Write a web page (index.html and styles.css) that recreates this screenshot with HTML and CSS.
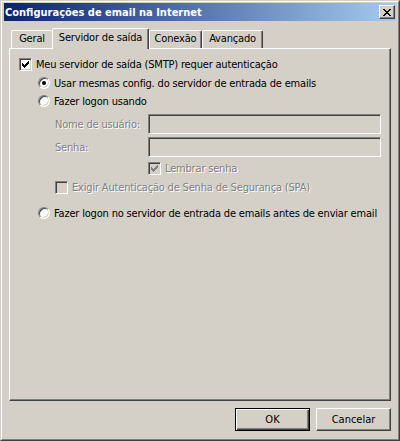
FILE: index.html
```html
<!DOCTYPE html>
<html lang="pt-BR">
<head>
  <meta charset="UTF-8" />
  <title>Configurações de email na Internet</title>
  <link rel="stylesheet" href="styles.css">
</head>
<body>

  <div class="window">
    <div class="frame">

      <div class="titlebar">
        <span class="title">Configurações de email na Internet</span>
        <span class="close-btn">
          <svg width="8" height="7" viewBox="0 0 8 7" shape-rendering="crispEdges"><path d="M0 0h2v1H0zM6 0h2v1H6zM1 1h2v1H1zM5 1h2v1H5zM2 2h4v1H2zM3 3h2v1H3zM2 4h4v1H2zM1 5h2v1H1zM5 5h2v1H5zM0 6h2v1H0zM6 6h2v1H6z"/></svg>
        </span>
      </div>

      <div class="tabs">
        <div class="tab tab-first">Geral</div>
        <div class="tab active">Servidor de saída</div>
        <div class="tab tab-conn">Conexão</div>
        <div class="tab tab-adv">Avançado</div>
      </div>

      <div class="panel">
        <div class="row opt-main">
          <span class="check"><svg width="7" height="7" viewBox="0 0 7 7" shape-rendering="crispEdges"><path d="M6 0h1v1H6zM5 1h2v1H5zM0 2h1v1H0zM4 2h3v1H4zM0 3h2v1H0zM3 3h3v1H3zM0 4h5v1H0zM1 5h3v1H1zM2 6h1v1H2z"/></svg></span>
          <span class="label">Meu servidor de saída (SMTP) requer autenticação</span>
        </div>

        <div class="row opt-radio">
          <span class="radio checked"></span>
          <span class="label">Usar mesmas config. do servidor de entrada de emails</span>
        </div>

        <div class="row opt-radio second">
          <span class="radio"></span>
          <span class="label">Fazer logon usando</span>
        </div>

        <div class="field first">
          <span class="field-label disabled">Nome de usuário:</span>
          <input type="text" class="textbox" disabled>
        </div>

        <div class="field">
          <span class="field-label disabled">Senha:</span>
          <input type="text" class="textbox" disabled>
        </div>

        <div class="row remember">
          <span class="check off"><svg width="7" height="7" viewBox="0 0 7 7" shape-rendering="crispEdges"><path d="M6 0h1v1H6zM5 1h2v1H5zM0 2h1v1H0zM4 2h3v1H4zM0 3h2v1H0zM3 3h3v1H3zM0 4h5v1H0zM1 5h3v1H1zM2 6h1v1H2z"/></svg></span>
          <span class="label disabled">Lembrar senha</span>
        </div>

        <div class="row spa">
          <span class="check off"></span>
          <span class="label disabled">Exigir Autenticação de Senha de Segurança (SPA)</span>
        </div>

        <div class="row opt-radio last">
          <span class="radio"></span>
          <span class="label">Fazer logon no servidor de entrada de emails antes de enviar email</span>
        </div>
      </div>

      <div class="footer">
        <button class="btn default">OK</button>
        <button class="btn">Cancelar</button>
      </div>

    </div>
  </div>

</body>
</html>
```

FILE: styles.css
```css
body {
  margin: 0;
  background: #d4d0c8;
  color: #000;
  font-family: "DejaVu Sans Condensed", "Liberation Sans", sans-serif;
  font-size: 11px;
  letter-spacing: -0.18px;
}
.window {
  width: 400px;
  height: 441px;
  box-sizing: border-box;
  border: 1px solid;
  border-color: #d4d0c8 #404040 #404040 #d4d0c8;
}
.frame {
  height: 100%;
  box-sizing: border-box;
  border: 1px solid;
  border-color: #fff #808080 #808080 #fff;
  padding: 1px 2px 2px;
  display: flex;
  flex-direction: column;
}

/* title bar */
.titlebar {
  height: 18px;
  flex-shrink: 0;
  display: flex;
  align-items: center;
  justify-content: space-between;
  padding: 0 1px 0 1px;
  background: linear-gradient(to right, #0a246a, #a6caf0);
}
.title {
  color: #fff;
  font-weight: bold;
  letter-spacing: 0;
}
.close-btn {
  width: 16px;
  height: 14px;
  box-sizing: border-box;
  display: flex;
  align-items: center;
  justify-content: center;
  background: #d4d0c8;
  border: 1px solid;
  border-color: #fff #404040 #404040 #fff;
  box-shadow: inset -1px -1px #808080;
}

/* tabs */
.tabs {
  display: flex;
  align-items: flex-start;
  height: 20px;
  margin-top: 7px;
  padding-left: 7px;
}
.tab {
  height: 18px;
  margin-top: 2px;
  box-sizing: border-box;
  border: 1px solid;
  border-bottom: none;
  border-color: #fff #404040 transparent #fff;
  border-radius: 2px 2px 0 0;
  box-shadow: inset -1px 0 #808080;
  background: #d4d0c8;
  text-align: center;
  line-height: 16px;
}
.tab-first {
  width: 41px;
  border-right: none;
  box-shadow: none;
}
.tab-conn {
  width: 53px;
}
.tab-adv {
  width: 61px;
}
.tab.active {
  width: 97px;
  height: 21px;
  margin-top: 0;
  line-height: 18px;
  position: relative;
  z-index: 1;
}

/* page */
.panel {
  height: 353px;
  flex-shrink: 0;
  margin: 0 5px;
  box-sizing: border-box;
  border: 1px solid;
  border-color: #fff #404040 #404040 #fff;
  box-shadow: inset -1px -1px #808080;
  display: flex;
  flex-direction: column;
}
.row {
  display: flex;
  align-items: center;
  height: 16px;
  gap: 4px;
}
.opt-main {
  margin-top: 7px;
  padding-left: 9px;
}
.opt-radio {
  margin-top: 3px;
  padding-left: 28px;
}
.opt-radio.second {
  margin-top: 2px;
}
.opt-radio.last {
  margin-top: 10px;
}
.field {
  display: flex;
  align-items: center;
  height: 20px;
  margin-top: 3px;
  padding-left: 45px;
}
.field.first {
  margin-top: 5px;
}
.field-label {
  width: 93px;
}
.remember {
  margin-top: 3px;
  padding-left: 138px;
}
.spa {
  margin-top: 3px;
  padding-left: 45px;
}
.label {
  white-space: nowrap;
}
.disabled {
  color: #808080;
  text-shadow: 1px 1px 0 #fff;
}

/* controls */
.check {
  width: 13px;
  height: 13px;
  flex-shrink: 0;
  box-sizing: border-box;
  display: flex;
  align-items: center;
  justify-content: center;
  background: #fff;
  border: 1px solid;
  border-color: #808080 #fff #fff #808080;
  box-shadow: inset 1px 1px #404040, inset -1px -1px #d4d0c8;
}
.check.off {
  background: #d4d0c8;
}
.check.off svg {
  fill: #808080;
}
.radio {
  width: 12px;
  height: 12px;
  flex-shrink: 0;
  box-sizing: border-box;
  display: flex;
  align-items: center;
  justify-content: center;
  border-radius: 50%;
  background: #fff;
  border: 1px solid;
  border-color: #808080 #fff #fff #808080;
  box-shadow: inset 1px 1px #404040, inset -1px -1px #d4d0c8;
}
.radio.checked::after {
  content: "";
  width: 4px;
  height: 4px;
  border-radius: 50%;
  background: #000;
}
.textbox {
  width: 233px;
  height: 20px;
  margin: 0;
  padding: 0;
  box-sizing: border-box;
  background: #d4d0c8;
  border: 1px solid;
  border-color: #808080 #fff #fff #808080;
  box-shadow: inset 1px 1px #404040, inset -1px -1px #d4d0c8;
  outline: none;
}

/* buttons */
.footer {
  display: flex;
  justify-content: flex-end;
  gap: 6px;
  margin-top: 7px;
  padding-right: 5px;
}
.btn {
  width: 75px;
  height: 23px;
  padding: 0;
  font: inherit;
  color: #000;
  background: #d4d0c8;
  border: 1px solid;
  border-color: #fff #404040 #404040 #fff;
  box-shadow: inset -1px -1px #808080;
}
.btn.default {
  border-color: #000;
  box-shadow: inset 1px 1px #fff, inset -1px -1px #404040, inset -2px -2px #808080;
}
```
